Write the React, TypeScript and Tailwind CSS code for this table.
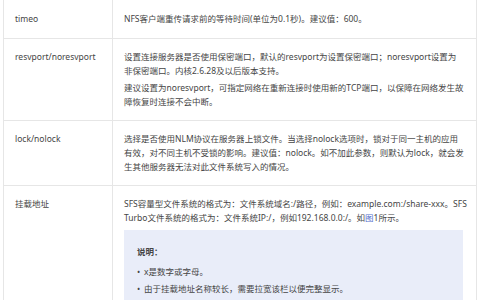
import React from "react";

const font = "font-['Noto_Sans','Noto_Sans_CJK_SC',sans-serif]";

function Row({ name, children, last, first }: { name: string; children: React.ReactNode; last?: boolean; first?: boolean }) {
  const pad = first ? "pt-[12px] pb-[12px]" : "pt-[11px] pb-[11px]";
  return (
    <div className={`flex ${last ? "" : "border-b border-[#e6e6e6]"}`}>
      <div className={`w-[109px] shrink-0 border-r border-[#e6e6e6] pl-[11px] pr-2 ${pad}`}>{name}</div>
      <div className={`flex-1 min-w-0 pl-[11px] pr-[9px] ${pad}`}>{children}</div>
    </div>
  );
}

export default function App() {
  return (
    <div className={`w-[480px] h-[300px] overflow-hidden bg-white pl-[3px] text-[8.5px] leading-[14px] text-[#454545] ${font}`}>
      <div className="w-[474px] border-l border-r border-[#e6e6e6]">
        <Row name="timeo" first>
          <p>NFS客户端重传请求前的等待时间(单位为0.1秒)。建议值：600。</p>
        </Row>
        <Row name="resvport/noresvport">
          <p>
            设置连接服务器是否使用保密端口，默认的resvport为设置保密端口；noresvport设置为
            <br />
            非保密端口。内核2.6.28及以后版本支持。
          </p>
          <p className="mt-[3px]">建议设置为noresvport，可指定网络在重新连接时使用新的TCP端口，以保障在网络发生故障恢复时连接不会中断。</p>
        </Row>
        <Row name="lock/nolock">
          <p>
            选择是否使用NLM协议在服务器上锁文件。当选择nolock选项时，锁对于同一主机的应用
            <br />
            有效，对不同主机不受锁的影响。建议值：nolock。如不加此参数，则默认为lock，就会发生其他服务器无法对此文件系统写入的情况。
          </p>
        </Row>
        <Row name="挂载地址" last>
          <p>
            SFS容量型文件系统的格式为：文件系统域名:/路径，例如：example.com:/share-xxx。SFS Turbo文件系统的格式为：文件系统IP:/，例如192.168.0.0:/。如
            <span className="text-[#526ecc]">图</span>1所示。
          </p>
          <div className="mt-[5px] mr-[4px] bg-[#e9edf9] pl-[13px] pr-3 pt-[15px] pb-3">
            <p className="font-semibold">说明：</p>
            <ul className="mt-[6px]">
              <li className="flex gap-[5px]">
                <span className="w-[2px] shrink-0">•</span>
                <span>x是数字或字母。</span>
              </li>
              <li className="flex gap-[5px] mt-[3px]">
                <span className="w-[2px] shrink-0">•</span>
                <span>由于挂载地址名称较长，需要拉宽该栏以便完整显示。</span>
              </li>
            </ul>
          </div>
        </Row>
      </div>
    </div>
  );
}
